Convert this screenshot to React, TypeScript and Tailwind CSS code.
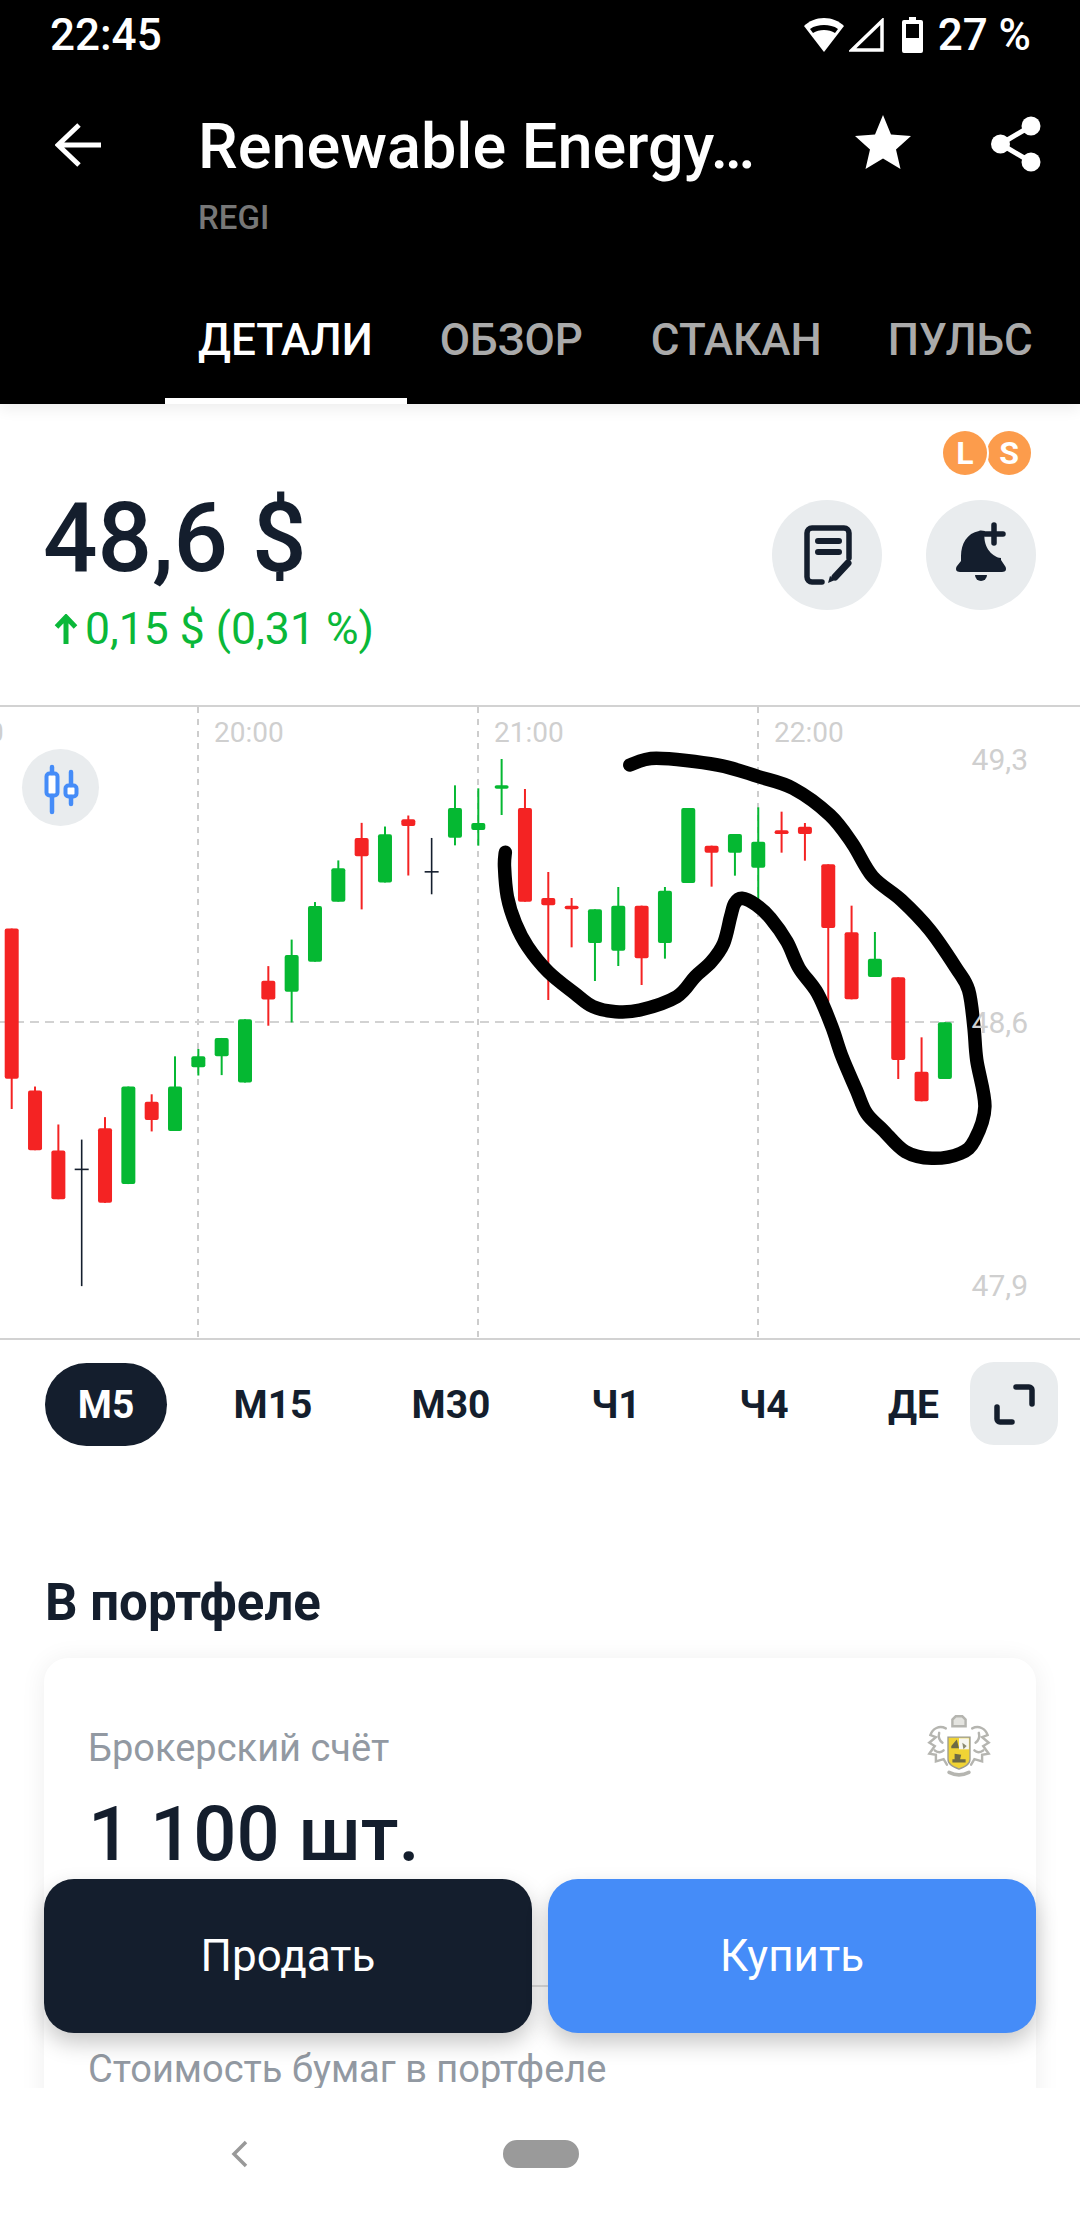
import React from "react";

type C = [string, number, number, number, number];
const RED = "#f42323";
const GREEN = "#05b832";
const DARK = "#141e2d";

// first group measured at y = 700 + p / 2.45
const a: C[] = [
  ["r", 560, 560, 928, 1002], ["r", 947, 957, 1103, 1103], ["r", 1040, 1104, 1223, 1223], ["k", 1077, 1150, 1150, 1436],
  ["r", 1022, 1049, 1232, 1232], ["g", 947, 947, 1186, 1186], ["r", 966, 984, 1029, 1057], ["g", 873, 947, 1056, 1056],
  ["g", 855, 873, 900, 920], ["g", 828, 828, 873, 919], ["g", 782, 782, 937, 937], ["r", 652, 688, 734, 798],
  ["g", 587, 625, 715, 790], ["g", 495, 505, 641, 641], ["g", 393, 412, 494, 494], ["r", 301, 338, 383, 513],
  ["g", 310, 329, 447, 447], ["r", 283, 292, 309, 430], ["k", 338, 421, 421, 476],
];
// second group measured at y = 720 + p / 3
const b: C[] = [
  ["g", 196, 264, 353, 376], ["g", 205, 309, 330, 377], ["g", 117, 196, 206, 285], ["r", 207, 264, 545, 545],
  ["r", 456, 534, 556, 840], ["r", 534, 557, 568, 682], ["g", 568, 568, 669, 783], ["g", 501, 557, 692, 738],
  ["r", 557, 557, 715, 795], ["g", 501, 512, 669, 716], ["g", 264, 264, 489, 489], ["r", 377, 377, 398, 500],
  ["g", 342, 342, 398, 467], ["g", 262, 365, 443, 545], ["r", 275, 331, 342, 398], ["r", 309, 320, 342, 422],
  ["r", 433, 433, 624, 845], ["r", 557, 637, 838, 838], ["g", 636, 716, 771, 771], ["r", 772, 772, 1020, 1077],
  ["r", 952, 1055, 1144, 1144], ["g", 907, 907, 1077, 1077],
];
const candles = [
  ...a.map(([c, w, t, bo, l]) => [c, 700 + w / 2.45, 700 + t / 2.45, 700 + bo / 2.45, 700 + l / 2.45] as C),
  ...b.map(([c, w, t, bo, l]) => [c, 720 + w / 3, 720 + t / 3, 720 + bo / 3, 720 + l / 3] as C),
];

const ink: [number, number][] = [
  [160, 397], [158, 440], [165, 530], [185, 610], [215, 680], [265, 755], [330, 820], [375, 860], [430, 875], [490, 870],
  [580, 830], [625, 770], [665, 725], [695, 670], [712, 590], [722, 550], [740, 535], [775, 555], [810, 595], [850, 665],
  [880, 745], [925, 820], [960, 920], [985, 1010], [1020, 1110], [1045, 1180], [1085, 1230], [1140, 1295], [1205, 1315],
  [1275, 1300], [1310, 1260], [1335, 1160], [1315, 1020], [1308, 920], [1295, 810], [1265, 745], [1200, 630], [1130, 540],
  [1060, 470], [1010, 370], [955, 285], [865, 205], [780, 170], [680, 135], [530, 115], [465, 135],
];
function inkPath() {
  const p = ink.map(([x, y]) => [440 + x / 2.45, 720 + y / 3]);
  let d = `M${p[0][0]} ${p[0][1]}`;
  for (let i = 0; i < p.length - 1; i++) {
    const p0 = p[Math.max(i - 1, 0)];
    const p1 = p[i];
    const p2 = p[i + 1];
    const p3 = p[Math.min(i + 2, p.length - 1)];
    d += ` C${p1[0] + (p2[0] - p0[0]) / 6} ${p1[1] + (p2[1] - p0[1]) / 6} ${p2[0] - (p3[0] - p1[0]) / 6} ${p2[1] - (p3[1] - p1[1]) / 6} ${p2[0]} ${p2[1]}`;
  }
  return d;
}

function Chart() {
  return (
    <div className="relative h-[635px] w-full border-y-2 border-[#d2d2d2] overflow-hidden">
      <svg viewBox="0 707 1080 631" className="block h-[631px] w-[1080px]">
        {[198, 478, 758].map((x) => (
          <line key={x} x1={x} x2={x} y1={707} y2={1338} stroke="#cdcdcd" strokeWidth={2} strokeDasharray="6 6" />
        ))}
        <line x1={0} x2={955} y1={1022} y2={1022} stroke="#d2d2d2" strokeWidth={2} strokeDasharray="9 6" />
        {candles.map(([c, w, t, bo, l], i) => {
          const x = 11.7 + 23.33 * i;
          const col = c === "r" ? RED : c === "g" ? GREEN : DARK;
          const doji = bo - t < 1;
          return (
            <g key={i}>
              <line x1={x} x2={x} y1={w} y2={l} stroke={col} strokeWidth={c === "k" ? 1.6 : 2} />
              {doji ? (
                <line x1={x - 7} x2={x + 7} y1={t} y2={t} stroke={col} strokeWidth={1.6} />
              ) : (
                <rect x={x - 7} y={t} width={14} height={bo - t} rx={2} fill={col} />
              )}
            </g>
          );
        })}
        <path d={inkPath()} fill="none" stroke="#000" strokeWidth={13.5} strokeLinecap="round" strokeLinejoin="round" />
      </svg>
      <span className="absolute left-[-66px] top-[8px] text-[28px] leading-[36px] text-[#cfcfcf]">19:00</span>
      <span className="absolute left-[214px] top-[8px] text-[28px] leading-[36px] text-[#cfcfcf]">20:00</span>
      <span className="absolute left-[494px] top-[8px] text-[28px] leading-[36px] text-[#cfcfcf]">21:00</span>
      <span className="absolute left-[774px] top-[8px] text-[28px] leading-[36px] text-[#cfcfcf]">22:00</span>
      <span className="absolute right-[52px] top-[33px] text-[30px] leading-[40px] text-[#cfcfcf]">49,3</span>
      <span className="absolute right-[52px] top-[296px] text-[30px] leading-[40px] text-[#cfcfcf]">48,6</span>
      <span className="absolute right-[52px] top-[559px] text-[30px] leading-[40px] text-[#cfcfcf]">47,9</span>
      <div className="absolute left-[22px] top-[42px] flex h-[77px] w-[77px] items-center justify-center rounded-full bg-[#e9ecee]">
        <svg width="77" height="77" viewBox="0 0 77 77" fill="none" stroke="#458cf8" strokeWidth={4} strokeLinecap="round">
          <rect x="24.5" y="24.5" width="11" height="22" rx="3" fill="#fff" strokeWidth={4} />
          <path d="M30 18v6M30 47v16" strokeWidth={4.5} />
          <rect x="43.5" y="36.5" width="11" height="11" rx="3" fill="#fff" />
          <path d="M49 23v13M49 48v7" strokeWidth={4.5} />
        </svg>
      </div>
    </div>
  );
}

function Logo() {
  return (
    <svg width="72" height="66" viewBox="0 0 64 60" fill="none">
      <g stroke="#b5b5b0" strokeWidth="2.2" strokeLinecap="round">
        <path d="M26 12h12v-6l-3-3h-6l-3 3z" fill="#e4e4e0" />
        <path d="M20 14c-6-3-12 0-14 6l5 2-6 5 5 3-5 7 6 1 0 6 7-2 3 5" />
        <path d="M44 14c6-3 12 0 14 6l-5 2 6 5-5 3 5 7-6 1 0 6-7-2-3 5" />
        <path d="M14 18c-1 4 0 7 3 9M50 18c1 4 0 7-3 9M10 34c3 2 6 2 8 0M54 34c-3 2-6 2-8 0" />
        <path d="M23 54c6 3 12 3 18 0" strokeWidth="3.2" />
      </g>
      <path d="M22 22h20v20c0 5-5 7-10 9-5-2-10-4-10-9z" fill="#f0d335" stroke="#9a9a90" strokeWidth="1.2" />
      <path d="M32 23h9v10h-9z" fill="#f6f6f0" />
      <path d="M25 30l5-6 2 8h-7zM26 42h12v3H26zM28 37l6 1-1 4h-5z" fill="#6d6a45" />
      <path d="M35 27l4 3-3 3z" fill="#8a8a70" />
    </svg>
  );
}

const tf: [string, string][] = [
  ["М15", "w-[178px]"],
  ["М30", "w-[178px]"],
  ["Ч1", "w-[152px]"],
  ["Ч4", "w-[144px]"],
];

export default function App() {
  return (
    <div className="relative flex h-[2220px] w-[1080px] flex-col overflow-hidden bg-white font-['Roboto',sans-serif] text-[#141e2d]">
      <header className="relative z-10 flex h-[404px] shrink-0 flex-col bg-black text-white shadow-[0_5px_14px_rgba(0,0,0,0.07)]">
        <div className="flex h-[70px] items-center justify-between pl-[50px] pr-[49px]">
          <span className="text-[44px] font-medium leading-[50px]">22:45</span>
          <div className="flex items-center">
            <svg width="42" height="36" viewBox="0 0 42 36" fill="#fff">
              <path d="M21 35 1 9c5-5 12-8 20-8s15 3 20 8z" />
              <path d="M21 13c-4 0-8 1-11 3l-3-4c4-3 9-4 14-4s10 1 14 4l-3 4c-3-2-7-3-11-3z" fill="#000" />
            </svg>
            <svg width="36" height="34" viewBox="0 0 36 34" fill="none" stroke="#fff" strokeWidth="3.5" className="ml-[4px]">
              <path d="M3 32 33 3v29z" />
            </svg>
            <svg width="21" height="36" viewBox="0 0 21 36" fill="#fff" className="ml-[17px]">
              <path d="M7 0h7v3h5a2 2 0 0 1 2 2v29a2 2 0 0 1-2 2H2a2 2 0 0 1-2-2V5a2 2 0 0 1 2-2h5z" />
              <rect x="4" y="7" width="13" height="14" fill="#000" />
            </svg>
            <span className="ml-[15px] text-[44px] font-medium leading-[50px]">27 %</span>
          </div>
        </div>
        <div className="mt-[37px] flex items-start pl-[55px] pr-[39px]">
          <svg width="46" height="44" viewBox="0 0 46 44" fill="none" stroke="#fff" strokeWidth="5" className="mt-[16px] shrink-0">
            <path d="M24 2 3 22l21 20M3 22h43" />
          </svg>
          <div className="ml-[97px] flex-1">
            <div className="text-[63px] font-medium leading-[80px]">Renewable Energy…</div>
            <div className="mt-[11px] text-[33px] font-medium leading-[40px] text-[#777777]">REGI</div>
          </div>
          <svg width="56" height="54" viewBox="0 0 56 54" fill="#fff" className="mt-[8px] shrink-0">
            <path d="m28 0 8 19.500 20 1.500-15 13.500 4.500 19.500L28 43.500 10.500 54 15 34.500 0 21l20-1.500z" />
          </svg>
          <svg width="50" height="56" viewBox="0 0 50 56" fill="#fff" className="ml-[80px] mt-[9px] shrink-0">
            <circle cx="40" cy="10" r="9.500" />
            <circle cx="9.500" cy="28" r="9.500" />
            <circle cx="40" cy="46" r="9.500" />
            <path d="M40 10 9.500 28 40 46" fill="none" stroke="#fff" strokeWidth="5" />
          </svg>
        </div>
        <div className="mt-auto flex pl-[165px] text-[44px] font-medium leading-[50px] text-[#aaaaaa]">
          <div className="flex h-[134px] items-center border-b-[6px] border-white pl-[33px] pr-[34px] pt-[12px] text-white">ДЕТАЛИ</div>
          <div className="flex h-[134px] items-center border-b-[6px] border-transparent pl-[33px] pr-[34px] pt-[12px]">ОБЗОР</div>
          <div className="flex h-[134px] items-center border-b-[6px] border-transparent pl-[34px] pr-[33px] pt-[12px]">СТАКАН</div>
          <div className="flex h-[134px] items-center border-b-[6px] border-transparent px-[33px] pt-[12px]">ПУЛЬС</div>
        </div>
      </header>

      <main className="relative min-h-0 flex-1 overflow-hidden">
        <section className="flex h-[301px] justify-between pl-[46px] pr-[44px]">
          <div className="pt-[86px]">
            <div className="-ml-[3px] text-[96px] font-medium leading-[96px]">48,6 $</div>
            <div className="mt-[21px] flex items-center text-[44.5px] leading-[44px] text-[#0ab839]">
              <svg width="24" height="30" viewBox="0 0 24 30" fill="none" stroke="#0ab839" strokeWidth="5" className="ml-[8px] mr-[7px]">
                <path d="M2.500 13 12 3l9.500 10M12 3v27" />
              </svg>
              0,15 $ (0,31 %)
            </div>
          </div>
          <div className="flex flex-col items-end">
            <div className="mr-[5px] mt-[27px] flex">
              <div className="z-10 flex h-[44px] w-[44px] items-center justify-center rounded-full bg-[#fc9c4c] text-[32px] font-bold leading-none text-white ring-2 ring-white">L</div>
              <div className="flex h-[44px] w-[44px] items-center justify-center rounded-full bg-[#fc9c4c] text-[32px] font-bold leading-none text-white">S</div>
            </div>
            <div className="mt-[25px] flex gap-[44px]">
              <div className="h-[110px] w-[110px] rounded-full bg-[#e9ecee]">
                <svg width="110" height="110" viewBox="0 0 110 110" fill="none" stroke="#141e2d" strokeLinecap="round">
                  <path d="M77 58V33a5 5 0 0 0-5-5H40a5 5 0 0 0-5 5v44a5 5 0 0 0 5 5h10" strokeWidth="5.500" />
                  <path d="M46 41h21M46 52h21" strokeWidth="6" />
                  <path d="M76 63 63 77" strokeWidth="7" />
                  <path d="m56 83 2-7 5 4z" fill="#141e2d" stroke="none" />
                </svg>
              </div>
              <div className="h-[110px] w-[110px] rounded-full bg-[#e9ecee]">
                <svg width="110" height="110" viewBox="0 0 110 110" fill="#141e2d">
                  <path d="M53 31C41 33 35 44 35 56v5l-4 5c-2 3-1 6 3 6h42c4 0 5-3 3-6l-4-6v-2C65 57 56 45 59 31c-2 0-4-1-6 0z" />
                  <path d="M49 75h12a6 6 0 0 1-12 0z" />
                  <path d="M68 25v18M59 34h18" fill="none" stroke="#141e2d" strokeWidth="5.500" strokeLinecap="round" />
                </svg>
              </div>
            </div>
          </div>
        </section>

        <Chart />

        <div className="ml-[45px] mt-[23px] flex h-[83px] w-[895px] items-center overflow-hidden text-[39px] font-bold leading-[48px]">
          <div className="flex h-[83px] w-[122px] shrink-0 items-center justify-center rounded-full bg-[#141e2d] text-white">М5</div>
          <div className="w-[17px] shrink-0" />
          {tf.map(([t, w]) => (
            <div key={t} className={`${w} shrink-0 text-center`}>{t}</div>
          ))}
          <div className="shrink-0 pl-[52px]">ДЕНЬ</div>
        </div>
        <div className="absolute left-[970px] top-[958px] flex h-[83px] w-[88px] items-center justify-center rounded-[24px] bg-[#e9ecee]">
          <svg width="88" height="83" viewBox="0 0 88 83" fill="none" stroke="#141e2d" strokeWidth="5.500" strokeLinecap="round" strokeLinejoin="round">
            <path d="M46 25h13a3 3 0 0 1 3 3v14M27 45v12a3 3 0 0 0 3 3h12" />
          </svg>
        </div>

        <h2 className="ml-[45px] mt-[127px] text-[51px] font-bold leading-[60px]">В портфеле</h2>
        <div className="mx-[44px] mt-[25px] rounded-[24px] bg-white px-[44px] pb-[60px] pt-[66px] shadow-[0_2px_26px_rgba(0,0,0,0.07)]">
          <div className="flex justify-between">
            <span className="text-[38px] leading-[48px] text-[#9299a2]">Брокерский счёт</span>
            <div className="-mr-[3px] -mt-[11px]"><Logo /></div>
          </div>
          <div className="mt-[15px] text-[76px] font-medium leading-[80px]">1 100 шт.</div>
          <div className="mt-[111px] h-[2px] bg-[#dedede]" />
          <div className="mt-[58px] text-[38px] leading-[48px] text-[#9299a2]">Стоимость бумаг в портфеле</div>
        </div>

        <div className="absolute bottom-[55px] left-[44px] right-[44px] flex h-[154px] gap-[16px] text-[44px] leading-[54px] text-white">
          <button className="flex-1 rounded-[30px] bg-[#141e2d] shadow-[0_10px_22px_rgba(0,0,0,0.22)]">Продать</button>
          <button className="flex-1 rounded-[30px] bg-[#458cf8] shadow-[0_10px_22px_rgba(0,0,0,0.22)]">Купить</button>
        </div>
      </main>

      <nav className="flex h-[132px] shrink-0 items-center bg-white pl-[231px]">
        <svg width="18" height="28" viewBox="0 0 18 28" fill="none" stroke="#999999" strokeWidth="3.500">
          <path d="M15 2 3 14l12 12" />
        </svg>
        <div className="ml-[254px] h-[28px] w-[76px] rounded-full bg-[#9a9a9a]" />
      </nav>
    </div>
  );
}
